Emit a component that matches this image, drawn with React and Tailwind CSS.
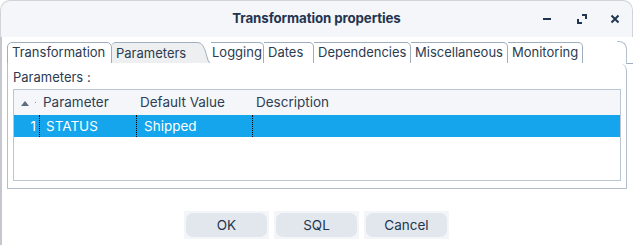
import React from "react";

const Tab = ({ label, w, first, pl = "pl-[4px]" }) => (
  <div
    className={`h-[22px] ${w} shrink-0 border-t border-r border-[#9fadbd] rounded-tr-[5px] ${first ? "border-l rounded-tl-[5px]" : ""} bg-white flex items-center ${pl} text-[13px] text-[#2b3b50] border-b whitespace-nowrap`}
  >
    {label}
  </div>
);

export default function App() {
  return (
    <div
      className="w-[633px] h-[245px] bg-white relative overflow-hidden"
      style={{ fontFamily: "Inter, 'Noto Sans', sans-serif" }}
    >
      {/* title bar */}
      <div className="h-[37px] bg-[#f4f6f9] rounded-t-[10px] border-t border-x border-[#d0d4da] relative flex items-center justify-center">
        <span className="text-[13.3px] font-bold text-[#1f3550] tracking-[-0.1px]">
          Transformation properties
        </span>
        <div className="absolute right-0 top-0 h-full flex items-center text-[#1f3550]">
          <svg width="10" height="10" viewBox="0 0 10 10" className="mr-[25px]">
            <rect x="1" y="4" width="8" height="2" fill="#1f3550" />
          </svg>
          <svg width="10" height="10" viewBox="0 0 10 10" className="mr-[23px]">
            <path d="M1 5 V9 H5" fill="none" stroke="#1f3550" strokeWidth="2" />
            <path d="M5 1 H9 V5" fill="none" stroke="#1f3550" strokeWidth="2" />
          </svg>
          <svg width="10" height="10" viewBox="0 0 10 10" className="mr-[12px]">
            <path d="M1.5 1.5 L8.5 8.5 M8.5 1.5 L1.5 8.5" stroke="#1f3550" strokeWidth="2" />
          </svg>
        </div>
      </div>

      {/* body */}
      <div className="h-[208px] border-l-2 border-[#c4c8ce] pt-[5px]">
        {/* tab strip */}
        <div className="flex ml-[5px] h-[22px] items-end">
          <Tab label="Transformation" w="w-[105px]" first />
          <div className="flex h-[22px] shrink-0">
            <div className="w-[85px] h-[22px] bg-[#eeeff1] border-t border-[#9fadbd] rounded-tl-[4px] flex items-center pl-[4px] text-[13px] text-[#2b3b50] whitespace-nowrap">
              Parameters
            </div>
            <svg width="14" height="22" viewBox="0 0 14 22" className="block">
              <path d="M0 0.5 C5 0.5 6 4 8 8 C10 14 11 21.5 14 21.5 L0 22 Z" fill="#eeeff1" />
              <path d="M0 0.5 C5 0.5 6 4 8 8 C10 14 11 21.5 14 21.5" fill="none" stroke="#9fadbd" strokeWidth="1" />
            </svg>
          </div>
          <Tab label="Logging" w="w-[53px]" pl="pl-[1px]" />
          <Tab label="Dates" w="w-[50px]" pl="pl-[4px]" />
          <Tab label="Dependencies" w="w-[97px]" pl="pl-[4px]" />
          <Tab label="Miscellaneous" w="w-[97px]" pl="pl-[4px]" />
          <Tab label="Monitoring" w="w-[75px]" pl="pl-[4px]" />
          <div className="flex-1 h-[22px] border-b border-[#9fadbd] w-[44px]" />
        </div>

        {/* panel */}
        <div className="ml-[5px] w-[620px] h-[126px] border-x border-b border-[#b3bfcd] rounded-tr-[8px] -mt-[1px] pt-[6px] px-[5px] bg-white relative">
          <div className="absolute -top-[22px] right-[-1px] w-[10px] h-[23px] border-r border-t border-[#b3bfcd] rounded-tr-[8px] bg-white" />
          <div className="text-[13px] text-[#2b3b50] h-[20px] leading-[16px]">Parameters :</div>
          <div className="w-[608px] h-[92px] border border-[#b9c6d6] bg-white">
            {/* header */}
            <div className="h-[25px] bg-[#f4f6f9] flex items-center text-[13.5px] text-[#2e3f55]">
              <div className="w-[25px] h-full flex items-center justify-end pr-[3px] relative">
                <svg width="8" height="6" viewBox="0 0 8 6" className="mr-[7px]">
                  <path d="M0 6 L4 1 L8 6 Z" fill="#5b6b80" />
                </svg>
                <span className="absolute right-[3px] top-[12px] w-[1px] h-[1px] bg-[#8a95a3]" />
              </div>
              <div className="w-[97px] pl-[4px]">Parameter</div>
              <div className="w-[116px] pl-[4px]">Default Value</div>
              <div className="pl-[4px]">Description</div>
            </div>
            {/* selected row */}
            <div className="h-[22px] bg-[#14a5ec] flex items-center text-[13.5px] text-white">
              <div className="w-[26px] h-full flex items-center justify-end pr-[3px] border-r border-dotted border-black">1</div>
              <div className="w-[97px] h-full flex items-center pl-[6px] border-r border-dotted border-black">STATUS</div>
              <div className="w-[116px] h-full flex items-center pl-[7px] border-r border-dotted border-black">Shipped</div>
              <div className="flex-1" />
            </div>
          </div>
        </div>

        {/* buttons */}
        <div className="flex justify-center gap-[5px] mt-[22px] pr-[2px]">
          {["OK", "SQL", "Cancel"].map((b) => (
            <div key={b} className="w-[85px] h-[28px] bg-[#f3f5f8] p-[2px]">
              <div className="w-full h-full rounded-[7px] bg-[#e2e7ee] flex items-center justify-center text-[13.5px] text-[#23364d]">
                {b}
              </div>
            </div>
          ))}
        </div>
      </div>
    </div>
  );
}
